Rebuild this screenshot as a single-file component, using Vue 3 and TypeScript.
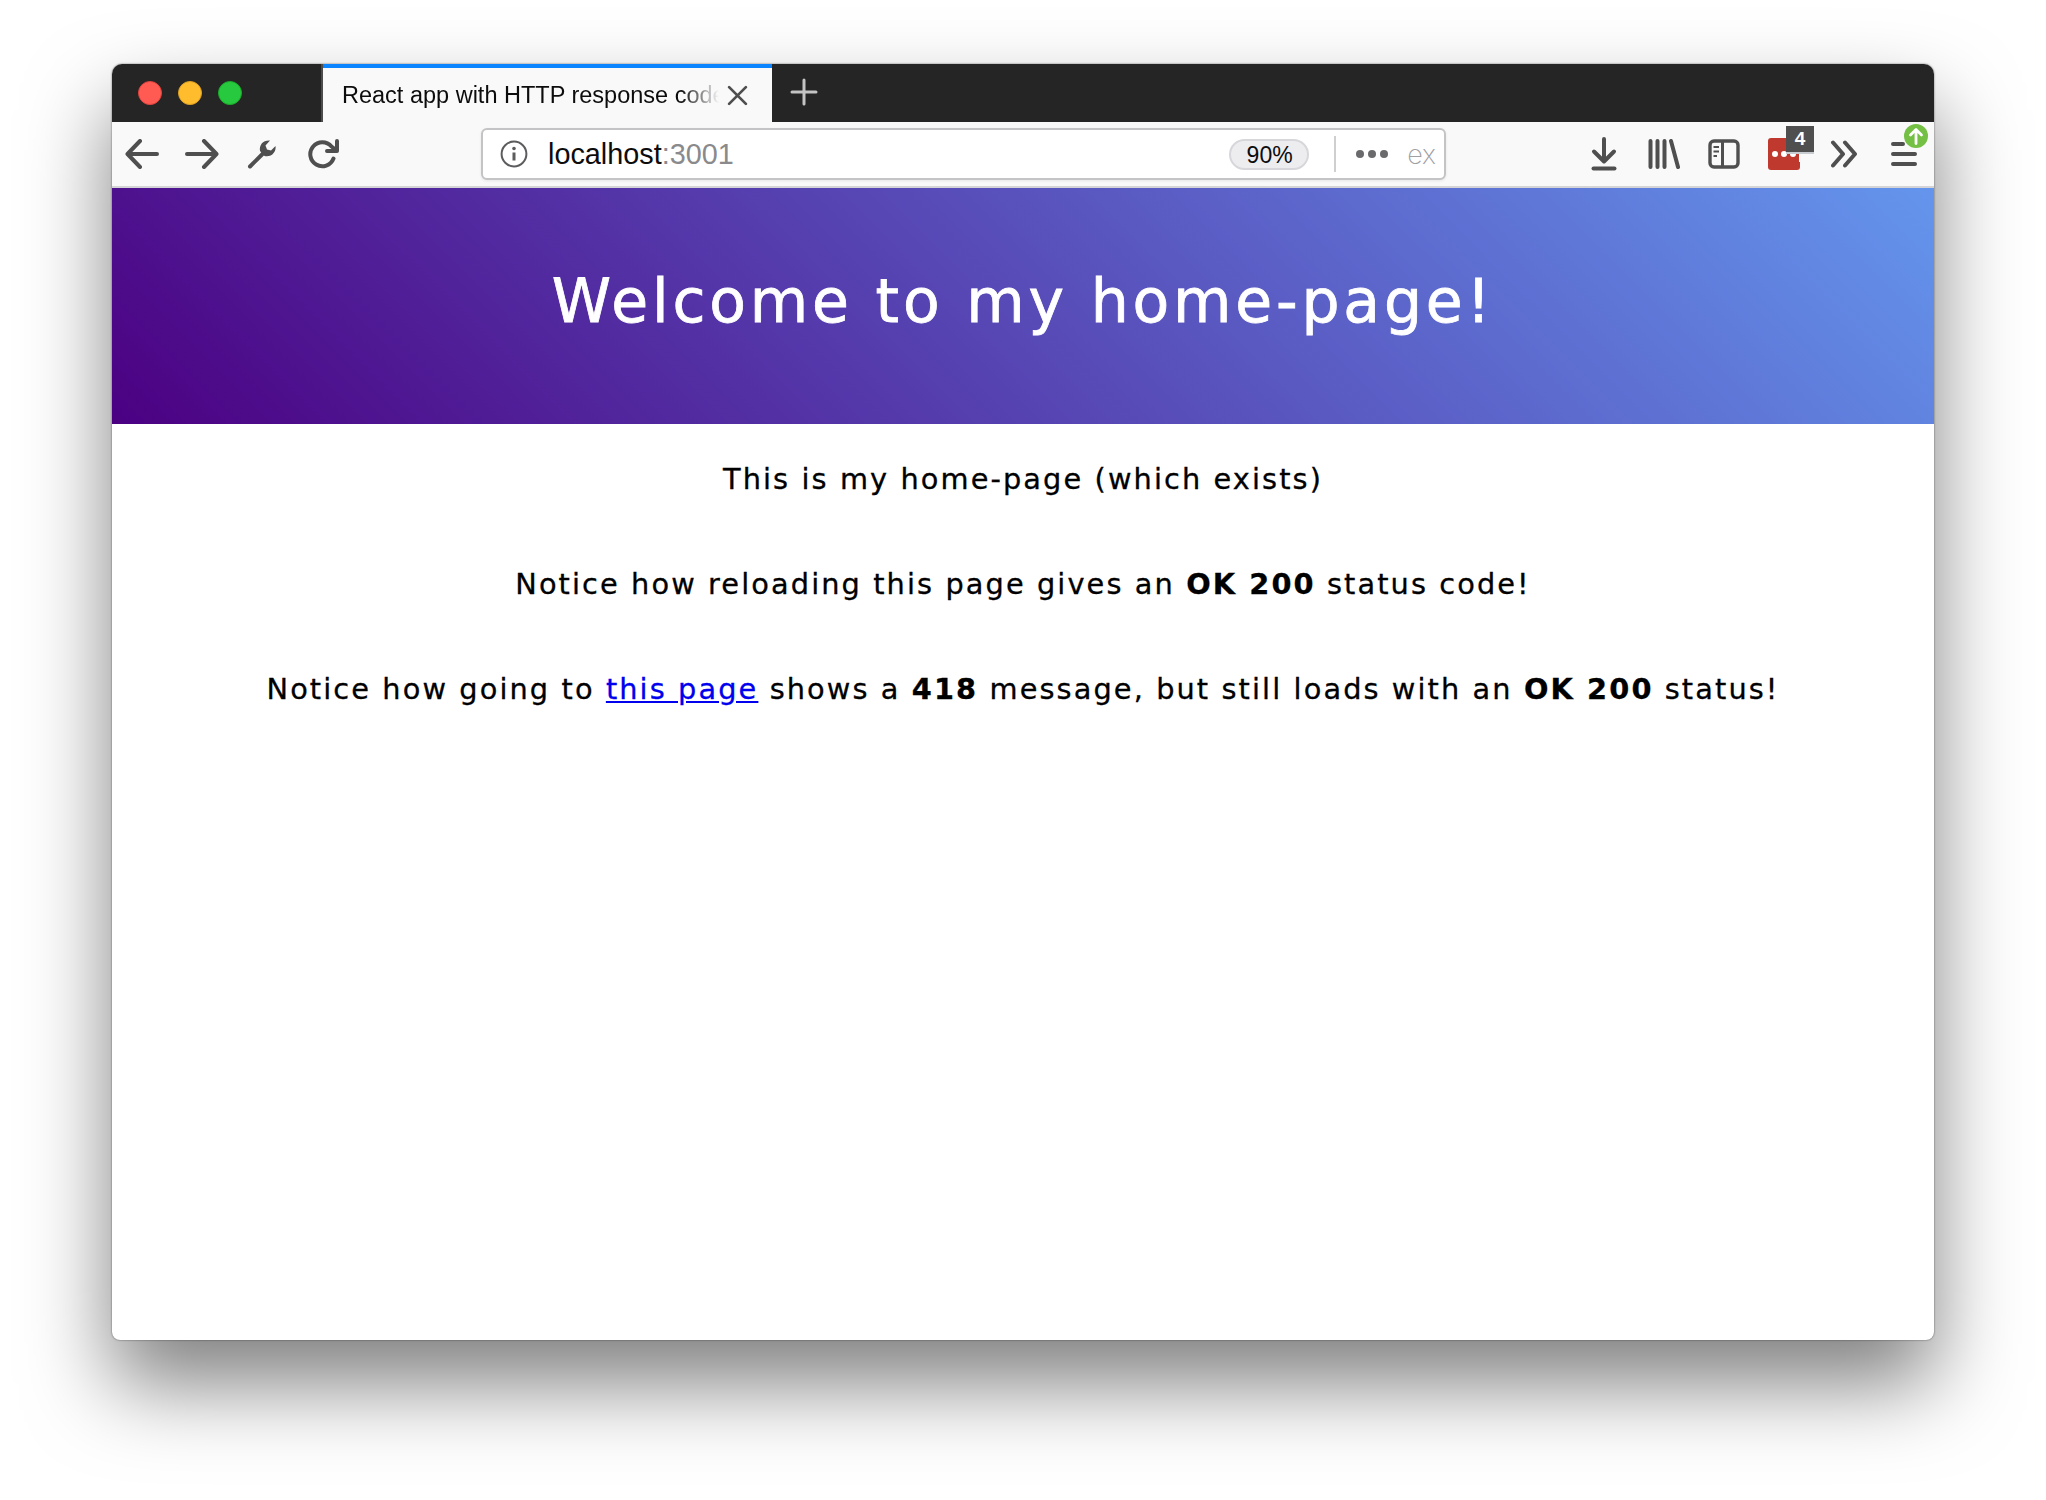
<template>
  <div class="window">
    <div class="tabbar">
      <div class="lights">
        <span class="light red"></span>
        <span class="light yellow"></span>
        <span class="light green"></span>
      </div>
      <div class="tab">
        <span class="tab-title">React app with HTTP response codes</span>
        <svg class="tab-close" width="21" height="21" viewBox="0 0 20 20">
          <path d="M2 2L18 18M18 2L2 18" stroke="#4f4f50" stroke-width="2.6" stroke-linecap="round" />
        </svg>
      </div>
      <svg class="new-tab" width="28" height="28" viewBox="0 0 28 28">
        <path d="M14 2V26M2 14H26" stroke="#c4c4c4" stroke-width="3" stroke-linecap="round" />
      </svg>
    </div>

    <div class="toolbar">
      <div class="btn">
        <svg width="34" height="30" viewBox="0 0 34 30" class="ico">
          <path d="M32 15H3M15 2L2.5 15L15 28" />
        </svg>
      </div>
      <div class="btn">
        <svg width="34" height="30" viewBox="0 0 34 30" class="ico">
          <path d="M2 15H31M19 2L31.5 15L19 28" />
        </svg>
      </div>
      <div class="btn">
        <svg width="30" height="30" viewBox="0 0 30 30">
          <path d="M3 27.5L16 14.5" stroke="#4f4f50" stroke-width="4" stroke-linecap="round" />
          <path d="M13 12C12 6 16 1 23 1.5L18.5 6.5L20 10.5L24 11.5L28.5 7C29.5 13 24.5 18.5 17.5 17Z" fill="#4f4f50" />
        </svg>
      </div>
      <div class="btn reload">
        <svg width="32" height="30" viewBox="0 0 32 30" class="ico">
          <path d="M25.5 19.5A12 12 0 1 1 23.5 7.5L28 11" />
          <path d="M29 2V12H19" stroke-linejoin="round" />
        </svg>
      </div>

      <div class="urlbar">
        <svg class="info" width="28" height="28" viewBox="0 0 28 28">
          <circle cx="14" cy="14" r="12.4" fill="none" stroke="#5c5c5f" stroke-width="2" />
          <circle cx="14" cy="8.5" r="1.8" fill="#5c5c5f" />
          <path d="M14 12.5V20.5" stroke="#5c5c5f" stroke-width="3" />
        </svg>
        <span class="host">localhost<span class="port">:3001</span></span>
        <span class="zoom">90%</span>
        <span class="sep"></span>
        <span class="dots"><i></i><i></i><i></i></span>
        <span class="ex">ex</span>
      </div>

      <div class="tools">
        <div class="btn">
          <svg width="26" height="34" viewBox="0 0 26 34" class="ico">
            <path d="M13 2V24M3 14.5L13 24.5L23 14.5" />
            <path d="M2.5 31.5H23.5" stroke-width="4" />
          </svg>
        </div>
        <div class="btn">
          <svg width="32" height="30" viewBox="0 0 32 30" class="ico">
            <path d="M2.5 2V28M9.5 2V28M16.5 2V28M23 2L30 28" />
          </svg>
        </div>
        <div class="btn">
          <svg width="32" height="30" viewBox="0 0 32 30">
            <rect x="2" y="2" width="28" height="26" rx="4" fill="none" stroke="#4f4f50" stroke-width="3.4" />
            <path d="M14.5 2V28" stroke="#4f4f50" stroke-width="3" />
            <path d="M5.5 8H11M5.5 12.5H11M5.5 17H9" stroke="#4f4f50" stroke-width="2.2" />
          </svg>
        </div>
        <div class="btn">
          <div class="lastpass">
            <i></i><i></i><i></i><b></b>
            <span class="badge">4</span>
          </div>
        </div>
        <div class="btn">
          <svg width="28" height="28" viewBox="0 0 28 28" class="ico">
            <path d="M3 2.5L13 14L3 25.5M15 2.5L25 14L15 25.5" />
          </svg>
        </div>
        <div class="btn">
          <svg width="26" height="26" viewBox="0 0 26 26" class="ico">
            <path d="M2 3H12M2 13H24M2 23H24" />
          </svg>
          <svg class="update" width="24" height="24" viewBox="0 0 24 24">
            <circle cx="12" cy="12" r="12" fill="#74c044" />
            <path d="M12 19.5V6M6.5 11L12 5.5L17.5 11" fill="none" stroke="#fff" stroke-width="2.8" stroke-linecap="round" stroke-linejoin="round" />
          </svg>
        </div>
      </div>
    </div>

    <header class="hero">
      <h1>Welcome to my home-page!</h1>
    </header>
    <main class="content">
      <p>This is my home-page (which exists)</p>
      <p>Notice how reloading this page gives an <b>OK 200</b> status code!</p>
      <p>
        Notice how going to <a href="#">this page</a> shows a <b>418</b> message, but still loads with an
        <b>OK 200</b> status!
      </p>
    </main>
  </div>
</template>

<script setup lang="ts">
// static page, nothing to wire up
</script>

<style>
body {
  background: #fff;
}
</style>

<style scoped>
.window {
  width: 1822px;
  height: 1276px;
  margin: 64px 0 160px 112px;
  display: flex;
  flex-direction: column;
  border-radius: 10px 10px 8px 8px;
  overflow: hidden;
  background: #fff;
  box-shadow: 0 44px 84px rgba(0, 0, 0, 0.5), 0 0 2px rgba(0, 0, 0, 0.6);
  font-family: "Liberation Sans", Arial, sans-serif;
}

.tabbar {
  height: 58px;
  flex: none;
  display: flex;
  background: #252525;
}

.lights {
  width: 211px;
  flex: none;
  display: flex;
  align-items: center;
  gap: 16px;
  padding-left: 26px;
  box-sizing: border-box;
  border-right: 2px solid #4c4c4c;
}

.light {
  width: 24px;
  height: 24px;
  border-radius: 50%;
  box-sizing: border-box;
}

.red {
  background: #ff5b52;
  border: 1px solid #e0443e;
}

.yellow {
  background: #ffbd2e;
  border: 1px solid #dea123;
}

.green {
  background: #27c93f;
  border: 1px solid #1aab29;
}

.tab {
  width: 449px;
  flex: none;
  display: flex;
  align-items: center;
  padding: 0 24px 0 19px;
  box-sizing: border-box;
  background: #f9f9fa;
  border-top: 4px solid #0a84ff;
}

.tab-title {
  flex: 1;
  min-width: 0;
  overflow: hidden;
  white-space: nowrap;
  font-size: 23.5px;
  color: #0c0c0d;
  -webkit-mask-image: linear-gradient(to right, #000 90%, transparent 100%);
  mask-image: linear-gradient(to right, #000 90%, transparent 100%);
}

.tab-close {
  margin-left: 8px;
  flex: none;
}

.new-tab {
  margin: 14px 0 0 18px;
}

.toolbar {
  height: 66px;
  flex: none;
  display: flex;
  align-items: center;
  box-sizing: border-box;
  background: #f9f9fa;
  border-bottom: 2px solid #d4d4d6;
}

.btn {
  position: relative;
  width: 60px;
  flex: none;
  display: flex;
  align-items: center;
  justify-content: center;
}

.reload {
  padding-left: 3px;
  box-sizing: border-box;
}

.ico {
  fill: none;
  stroke: #4f4f50;
  stroke-width: 4;
  stroke-linecap: round;
  stroke-linejoin: round;
}

.urlbar {
  width: 965px;
  height: 52px;
  margin-left: 129px;
  flex: none;
  display: flex;
  align-items: center;
  box-sizing: border-box;
  padding: 0 8px 0 17px;
  background: #fff;
  border: 2px solid #c4c4c6;
  border-radius: 6px;
  box-shadow: 0 1px 3px rgba(0, 0, 0, 0.08);
}

.info {
  flex: none;
}

.host {
  margin-left: 20px;
  padding-top: 1px;
  font-size: 28.8px;
  color: #0c0c0d;
}

.port {
  color: #8a8a8c;
}

.zoom {
  width: 80px;
  height: 31px;
  margin-left: auto;
  padding: 2px 0 0 1px;
  display: flex;
  align-items: center;
  justify-content: center;
  box-sizing: border-box;
  background: #ededf0;
  border: 2px solid #d7d7db;
  border-radius: 16px;
  font-size: 23px;
  color: #0c0c0d;
}

.sep {
  width: 2px;
  height: 36px;
  margin-left: 25px;
  background: #cfcfd2;
}

.dots {
  display: flex;
  gap: 4px;
  margin-left: 20px;
}

.dots i {
  width: 8px;
  height: 8px;
  border-radius: 50%;
  background: #6a6a6c;
}

.ex {
  margin-left: 19px;
  font-family: Inter, "Liberation Sans", sans-serif;
  font-size: 27px;
  font-weight: 200;
  color: #a0a0a2;
}

.tools {
  margin-left: auto;
  display: flex;
}

.lastpass {
  position: relative;
  width: 32px;
  height: 32px;
  display: flex;
  align-items: center;
  gap: 3px;
  padding-left: 4px;
  box-sizing: border-box;
  background: #c0392f;
  border-radius: 3px;
}

.lastpass i {
  width: 6px;
  height: 6px;
  border-radius: 50%;
  background: #fff;
}

.lastpass b {
  width: 1px;
  height: 16px;
  background: #fff;
}

.badge {
  position: absolute;
  left: 18px;
  top: -12px;
  width: 28px;
  height: 26px;
  display: flex;
  align-items: center;
  justify-content: center;
  background: #4f4f50;
  border-bottom: 2px solid #c8ccd0;
  color: #fff;
  font-size: 19px;
  font-weight: 700;
}

.update {
  position: absolute;
  left: 30px;
  top: -13px;
}

.hero {
  height: 236px;
  flex: none;
  display: flex;
  align-items: center;
  justify-content: center;
  padding-bottom: 10px;
  box-sizing: border-box;
  background: linear-gradient(45deg, #4b0082, #6495ed);
}

.hero h1 {
  margin: 0;
  font-family: "DejaVu Sans", sans-serif;
  font-size: 60px;
  font-weight: 400;
  letter-spacing: 3.8px;
  -webkit-text-stroke: 0.8px #fff;
  color: #fff;
}

.content {
  flex: 1;
  padding-top: 36px;
  text-align: center;
  font-family: "DejaVu Sans", sans-serif;
  font-size: 28.8px;
  letter-spacing: 2.1px;
  -webkit-text-stroke: 0.3px;
  color: #000;
}

.content p {
  margin: 0;
  height: 105px;
  line-height: 38px;
}

.content b {
  font-weight: 700;
}

.content a {
  color: #0000ee;
}
</style>
